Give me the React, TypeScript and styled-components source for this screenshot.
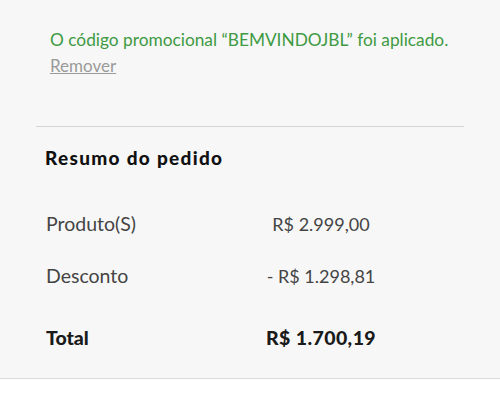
import React from "react";
import styled, { createGlobalStyle } from "styled-components";

const Global = createGlobalStyle`
  html, body { margin: 0; padding: 0; background: #ffffff; }
  body { font-family: "Lato", "Liberation Sans", sans-serif; }
`;

const Panel = styled.div`
  background: #f7f7f7;
  border-bottom: 1px solid #dadada;
  height: 379px;
  box-sizing: border-box;
  padding-top: 28px;
`;

const Promo = styled.div`
  padding: 0 50px;
  display: flex;
  flex-direction: column;
  align-items: flex-start;
  gap: 2px;
`;

const PromoMessage = styled.p`
  margin: 0;
  color: #3e9a43;
  font-size: 17.3px;
  line-height: 24px;
`;

const RemoveLink = styled.a`
  color: #9a9a9a;
  font-size: 17px;
  line-height: 24px;
  text-decoration: underline;
  cursor: pointer;
`;

const Divider = styled.hr`
  margin: 48px 36px 0;
  border: 0;
  height: 1px;
  background: #d6d6d6;
`;

const Summary = styled.section`
  padding: 19px 0 0 46px;
  display: flex;
  flex-direction: column;
`;

const Title = styled.h2`
  margin: 0 0 42px -1px;
  font-size: 19px;
  line-height: 24px;
  font-weight: 900;
  letter-spacing: 1.3px;
  color: #111;
`;

const Row = styled.div<{ $total?: boolean }>`
  display: grid;
  grid-template-columns: 200px 150px;
  line-height: 24px;
  color: ${(p) => (p.$total ? "#1a1a1a" : "#444")};
  font-weight: ${(p) => (p.$total ? 900 : 400)};
  margin-bottom: ${(p) => (p.$total ? "0" : "28px")};
  margin-top: ${(p) => (p.$total ? "10px" : "0")};
`;

const Label = styled.span`
  font-size: 19.5px;
`;

const Value = styled.span<{ $total?: boolean }>`
  text-align: center;
  font-size: ${(p) => (p.$total ? "19.5px" : "18px")};
  letter-spacing: ${(p) => (p.$total ? "0.4px" : "0")};
`;

const rows = [
  { label: "Produto(S)", value: "R$ 2.999,00" },
  { label: "Desconto", value: "- R$ 1.298,81" },
];

export default function App() {
  return (
    <>
      <Global />
      <Panel>
        <Promo>
          <PromoMessage>
            O código promocional “BEMVINDOJBL” foi aplicado.
          </PromoMessage>
          <RemoveLink>Remover</RemoveLink>
        </Promo>
        <Divider />
        <Summary>
          <Title>Resumo do pedido</Title>
          {rows.map((r) => (
            <Row key={r.label}>
              <Label>{r.label}</Label>
              <Value>{r.value}</Value>
            </Row>
          ))}
          <Row $total>
            <Label>Total</Label>
            <Value $total>R$ 1.700,19</Value>
          </Row>
        </Summary>
      </Panel>
    </>
  );
}
